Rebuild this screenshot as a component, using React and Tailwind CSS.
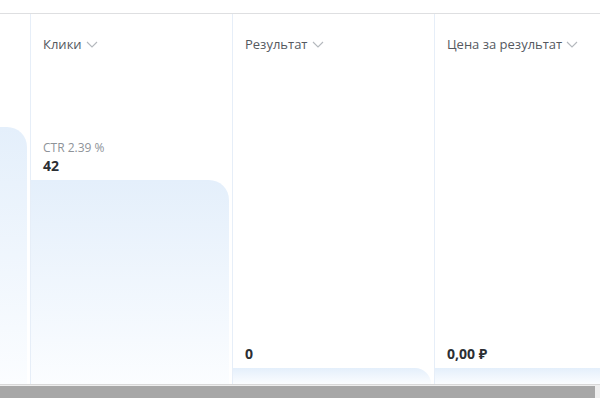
import React from 'react';

const Chevron = () => (
    <svg width="12" height="7" viewBox="0 0 12 7" fill="none" className="ml-[4px] mt-[1px]">
        <path d="M1 1l5 5 5-5" stroke="#b4b8bd" strokeWidth="1.1" />
    </svg>
);

const Bar = ({ className }) => (
    <div className={`mr-[3px] rounded-tr-[20px] bg-gradient-to-b from-[#e4effb] to-[#fbfdff] ${className}`} />
);

const Column = ({ title, width, children }) => (
    <div className={`flex h-full flex-col border-l border-[#e6eef8] ${width}`}>
        <div className="flex items-center pl-3 pt-[21px] text-[13px] leading-[18px] text-[#55595f]">
            <span>{title}</span>
            <Chevron />
        </div>
        <div className="flex-1" />
        {children}
    </div>
);

const App = () => {
    return (
        <div className="flex h-[400px] w-[600px] flex-col overflow-hidden bg-white" style={{ fontFamily: '"Open Sans", "Noto Sans", sans-serif' }}>
            <div className="h-[14px] shrink-0 border-b border-[#dedfe1]" />

            <div className="flex h-[370px] shrink-0">
                {/* previous metric, cut off at the left edge */}
                <div className="flex h-full w-[30px] flex-col">
                    <div className="flex-1" />
                    <Bar className="h-[257px]" />
                </div>

                <Column title="Клики" width="w-[202px]">
                    <div className="pl-3 text-[12px] leading-[15px] text-[#8e9399]">CTR 2.39 %</div>
                    <div className="mt-[3px] pl-3 text-[14px] font-bold leading-[15px] text-[#2c2f33]">42</div>
                    <Bar className="mt-[7px] h-[204px]" />
                </Column>

                <Column title="Результат" width="w-[202px]">
                    <div className="pl-3 text-[14px] font-bold leading-[15px] text-[#2c2f33]">0</div>
                    <Bar className="mt-[7px] h-[16px] rounded-tr-[14px]" />
                </Column>

                <Column title="Цена за результат" width="flex-1">
                    <div className="pl-3 text-[14px] font-bold leading-[15px] text-[#2c2f33]">0,00 ₽</div>
                    <div className="mt-[7px] h-[16px] bg-gradient-to-b from-[#e4effb] to-[#fbfdff]" />
                </Column>
            </div>

            {/* horizontal scrollbar */}
            <div className="flex h-[14px] shrink-0 items-center border-t border-[#d8d8d8] bg-[#eeeeee] pr-[5px]">
                <div className="h-[12px] w-full bg-[#a7a7a7]" />
            </div>
            <div className="flex-1 bg-white" />
        </div>
    );
};

export default App;
